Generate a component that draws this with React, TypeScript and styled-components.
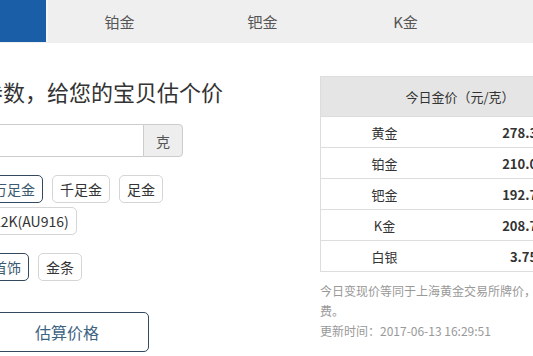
import React from "react";
import styled, { createGlobalStyle } from "styled-components";

const Global = createGlobalStyle`
  html, body { margin: 0; padding: 0; background: #fff; }
  body {
    font-family: "Noto Sans CJK SC", "Noto Sans", "Liberation Sans", sans-serif;
    color: #333;
    overflow: hidden;
  }
`;

const Viewport = styled.div`
  width: 533px;
  height: 356px;
  overflow: hidden;
`;

const TabBar = styled.div`
  display: flex;
  height: 43px;
  background: #efefef;
  margin-left: -95px;
  width: 760px;
`;

const Tab = styled.div<{ $active?: boolean }>`
  flex: 0 0 143px;
  height: ${(p) => (p.$active ? "42px" : "43px")};
  display: flex;
  align-items: center;
  justify-content: center;
  font-size: 15px;
  color: ${(p) => (p.$active ? "#fff" : "#555")};
  background: ${(p) => (p.$active ? "#1a5ea7" : "transparent")};
  border-right: ${(p) => (p.$active ? "2px solid #f6f6f6" : "none")};
  box-sizing: border-box;
`;

const Content = styled.div`
  display: flex;
  gap: 20px;
  margin-left: -63px;
  padding-top: 33px;
`;

const LeftCol = styled.div`
  width: 363px;
  flex: 0 0 363px;
`;

const Heading = styled.h2`
  margin: 0;
  font-size: 22px;
  font-weight: normal;
  line-height: 30px;
  color: #333;
  white-space: nowrap;
`;

const Form = styled.div`
  padding-left: 48px;
`;

const InputGroup = styled.div`
  display: flex;
  width: 198px;
  height: 33px;
  margin-top: 18px;
`;

const Input = styled.input`
  flex: 1;
  min-width: 0;
  border: 1px solid #ccc;
  border-right: none;
  border-radius: 4px 0 0 4px;
  padding: 0 10px;
  font-size: 14px;
  outline: none;
  box-sizing: border-box;
`;

const Addon = styled.span`
  flex: 0 0 40px;
  display: flex;
  align-items: center;
  justify-content: center;
  background: #eee;
  border: 1px solid #ccc;
  border-radius: 0 4px 4px 0;
  font-size: 14px;
  color: #555;
  box-sizing: border-box;
`;

const OptionGroup = styled.div<{ $top: number }>`
  display: flex;
  flex-wrap: wrap;
  gap: 4px 9px;
  width: 198px;
  margin-top: ${(p) => p.$top}px;
`;

const Option = styled.span<{ $selected?: boolean }>`
  display: inline-flex;
  align-items: center;
  height: 28px;
  padding: 0 7px;
  border: 1px solid ${(p) => (p.$selected ? "#34495e" : "#d5d5d5")};
  border-radius: 5px;
  font-size: 14px;
  color: ${(p) => (p.$selected ? "#3b5a70" : "#333")};
  box-sizing: border-box;
  white-space: nowrap;
`;

const SubmitButton = styled.button`
  display: flex;
  align-items: center;
  justify-content: center;
  margin-top: 31px;
  width: 164px;
  height: 40px;
  background: #fff;
  border: 1px solid #34495e;
  border-radius: 5px;
  font-family: inherit;
  font-size: 16px;
  color: #3d6383;
  padding: 0;
`;

const RightCol = styled.div`
  flex: 0 0 280px;
  width: 280px;
`;

const PriceTable = styled.table`
  width: 280px;
  border-collapse: collapse;
  border: 1px solid #ddd;
  font-size: 13px;
`;

const HeadCell = styled.th`
  height: 39px;
  background: #e5e5e5;
  font-weight: normal;
  font-size: 13px;
  color: #333;
  text-align: center;
  padding: 0 0 0 0;
`;

const Row = styled.tr`
  border-top: 1px solid #ddd;
`;

const LabelCell = styled.td`
  width: 127px;
  height: 30px;
  text-align: center;
  color: #333;
  padding: 0;
`;

const ValueCell = styled.td`
  text-align: center;
  font-weight: bold;
  color: #333;
  padding: 0;
`;

const Note = styled.p`
  margin: 9px 0 0;
  font-size: 12px;
  line-height: 20px;
  color: #999;
  width: 280px;
`;

const prices = [
  { name: "黄金", value: "278.35" },
  { name: "铂金", value: "210.00" },
  { name: "钯金", value: "192.70" },
  { name: "K金", value: "208.75" },
  { name: "白银", value: "3.75" },
];

export default function App() {
  return (
    <Viewport>
      <Global />
      <TabBar>
        <Tab $active>黄金</Tab>
        <Tab>铂金</Tab>
        <Tab>钯金</Tab>
        <Tab>K金</Tab>
        <Tab>白银</Tab>
      </TabBar>
      <Content>
        <LeftCol>
          <Heading>输入参数，给您的宝贝估个价</Heading>
          <Form>
            <InputGroup>
              <Input type="text" />
              <Addon>克</Addon>
            </InputGroup>
            <OptionGroup $top={18}>
              <Option $selected>万足金</Option>
              <Option>千足金</Option>
              <Option>足金</Option>
              <Option>22K(AU916)</Option>
            </OptionGroup>
            <OptionGroup $top={18}>
              <Option $selected>首饰</Option>
              <Option>金条</Option>
            </OptionGroup>
            <SubmitButton>估算价格</SubmitButton>
          </Form>
        </LeftCol>
        <RightCol>
          <PriceTable>
            <thead>
              <tr>
                <HeadCell colSpan={2}>今日金价（元/克）</HeadCell>
              </tr>
            </thead>
            <tbody>
              {prices.map((p) => (
                <Row key={p.name}>
                  <LabelCell>{p.name}</LabelCell>
                  <ValueCell>{p.value}</ValueCell>
                </Row>
              ))}
            </tbody>
          </PriceTable>
          <Note>
            今日变现价等同于上海黄金交易所牌价，无任何手续费。
            <br />
            更新时间：2017-06-13 16:29:51
          </Note>
        </RightCol>
      </Content>
    </Viewport>
  );
}
